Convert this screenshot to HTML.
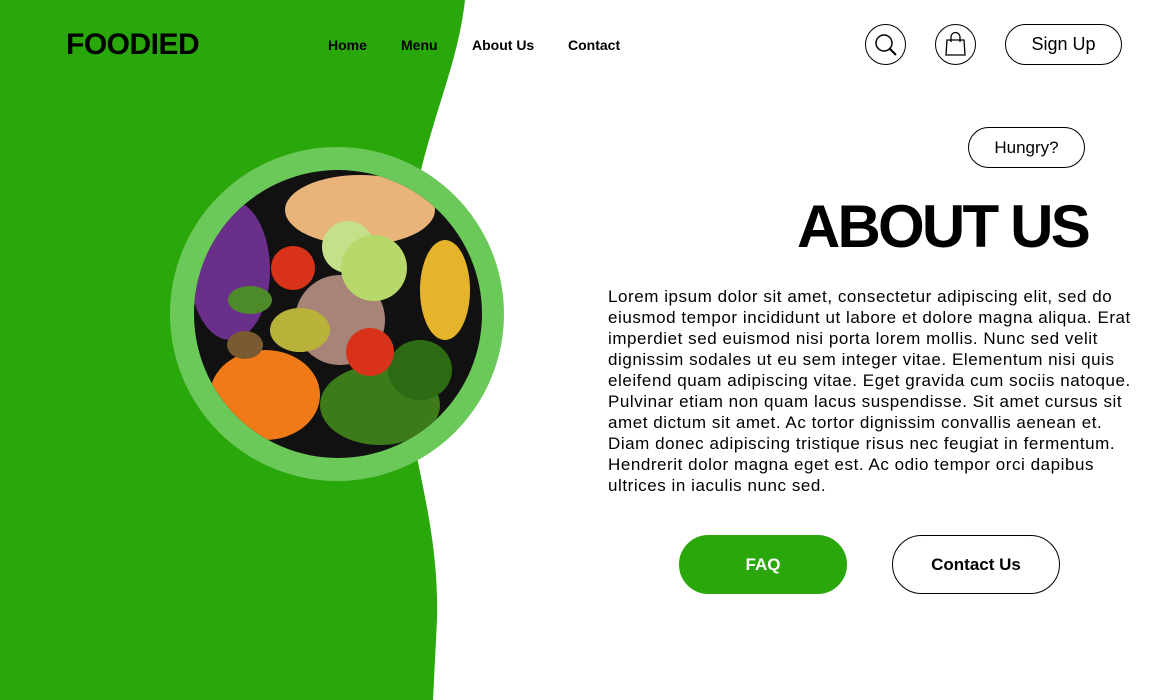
<!DOCTYPE html>
<html><head><meta charset="utf-8"><style>
*{margin:0;padding:0;box-sizing:border-box}
body{width:1152px;height:700px;overflow:hidden;background:#fff;font-family:"Liberation Sans",sans-serif;position:relative;color:#000}
.abs{position:absolute}
.logo{left:66px;top:28px;font-size:30px;font-weight:bold;letter-spacing:-0.5px}
.nav{top:37px;font-size:14px;font-weight:600}
.ic{width:41px;height:41px;border:1.3px solid #000;border-radius:50%;top:24px}
.pill{border:1.3px solid #000;border-radius:30px;display:flex;align-items:center;justify-content:center}
p.txt{left:608px;top:286px;font-size:17px;letter-spacing:0.55px;line-height:21px;white-space:nowrap}
</style></head><body>
<svg class="abs" style="left:0;top:0" width="1152" height="700">
<path d="M0 0 H465 C455 90 410 150 402 300 C396 430 440 500 437 620 L433 700 H0 Z" fill="#2aa70b"/>
<circle cx="337" cy="314" r="167" fill="#6bc95a"/>
<defs><clipPath id="c"><circle cx="338" cy="314" r="144"/></clipPath></defs>
<g clip-path="url(#c)">
<rect x="190" y="166" width="300" height="300" fill="#111"/>
<ellipse cx="230" cy="270" rx="40" ry="70" fill="#6a2f8a"/>
<ellipse cx="360" cy="210" rx="75" ry="35" fill="#e9b47a"/>
<ellipse cx="340" cy="320" rx="45" ry="45" fill="#a88478"/>
<ellipse cx="445" cy="290" rx="25" ry="50" fill="#e6b42a"/>
<ellipse cx="265" cy="395" rx="55" ry="45" fill="#f07a18"/>
<ellipse cx="380" cy="405" rx="60" ry="40" fill="#3d7a1a"/>
<ellipse cx="420" cy="370" rx="32" ry="30" fill="#2e6a14"/>
<ellipse cx="300" cy="330" rx="30" ry="22" fill="#b8b13a"/>
<circle cx="293" cy="268" r="22" fill="#d8321a"/>
<circle cx="370" cy="352" r="24" fill="#d8321a"/>
<circle cx="348" cy="247" r="26" fill="#c6e08a"/>
<circle cx="374" cy="268" r="33" fill="#b7d86a"/>
<ellipse cx="250" cy="300" rx="22" ry="14" fill="#4d8b2a"/>
<ellipse cx="245" cy="345" rx="18" ry="14" fill="#7a5a30"/>
</g>
</svg>
<div class="abs logo">FOODIED</div>
<div class="abs nav" style="left:328px">Home</div>
<div class="abs nav" style="left:401px">Menu</div>
<div class="abs nav" style="left:472px;font-weight:bold">About Us</div>
<div class="abs nav" style="left:568px">Contact</div>
<div class="abs ic" style="left:865px"><svg width="39" height="39"><circle cx="18" cy="18" r="8" fill="none" stroke="#000" stroke-width="1.5"/><line x1="24" y1="24" x2="30" y2="30" stroke="#000" stroke-width="2"/></svg></div>
<div class="abs ic" style="left:935px"><svg width="39" height="39"><path d="M11 15 H28 L29 30 H10 Z" fill="none" stroke="#000" stroke-width="1.3"/><path d="M15 17 V12 a4.5 4.5 0 0 1 9 0 V17" fill="none" stroke="#000" stroke-width="1.3"/></svg></div>
<div class="abs pill" style="left:1005px;top:24px;width:117px;height:41px;font-size:18px">Sign Up</div>
<div class="abs pill" style="left:968px;top:127px;width:117px;height:41px;font-size:17px">Hungry?</div>
<div class="abs" style="left:797px;top:192px;font-size:60px;font-weight:bold;letter-spacing:-2.8px">ABOUT US</div>
<p class="abs txt">Lorem ipsum dolor sit amet, consectetur adipiscing elit, sed do<br>eiusmod tempor incididunt ut labore et dolore magna aliqua. Erat<br>imperdiet sed euismod nisi porta lorem mollis. Nunc sed velit<br>dignissim sodales ut eu sem integer vitae. Elementum nisi quis<br>eleifend quam adipiscing vitae. Eget gravida cum sociis natoque.<br>Pulvinar etiam non quam lacus suspendisse. Sit amet cursus sit<br>amet dictum sit amet. Ac tortor dignissim convallis aenean et.<br>Diam donec adipiscing tristique risus nec feugiat in fermentum.<br>Hendrerit dolor magna eget est. Ac odio tempor orci dapibus<br>ultrices in iaculis nunc sed.</p>
<div class="abs pill" style="left:679px;top:535px;width:168px;height:59px;background:#2aa70b;border-color:#2aa70b;color:#fff;font-weight:bold;font-size:17px">FAQ</div>
<div class="abs pill" style="left:892px;top:535px;width:168px;height:59px;font-weight:bold;font-size:17px">Contact Us</div>
</body></html>
